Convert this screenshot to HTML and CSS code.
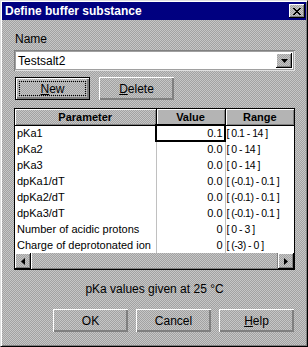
FILE: index.html
```html
<!DOCTYPE html>
<html lang="en">
<head>
  <meta charset="UTF-8">
  <title>Define buffer substance</title>
  <link rel="stylesheet" href="styles.css">
</head>
<body>

  <div class="window dither">
    <!-- Title bar -->
    <div class="titlebar">
      <span class="title">Define buffer substance</span>
      <button class="close dither" title="Close">
        <svg width="8" height="7" viewBox="0 0 8 7"><path d="M0 0h2v1h1v1h2v-1h1v-1h2v1h-1v1h-1v1h-1v1h1v1h1v1h1v1h-2v-1h-1v-1h-2v1h-1v1h-2v-1h1v-1h1v-1h1v-1h-1v-1h-1v-1h-1z" fill="#000"/></svg>
      </button>
    </div>

    <div class="content">
      <div class="label">Name</div>

      <div class="combo">
        <span class="combo-text">Testsalt2</span>
        <span class="combo-btn dither">
          <svg width="7" height="4" viewBox="0 0 7 4"><path d="M0 0h7l-3.5 4z" fill="#000"/></svg>
        </span>
      </div>

      <div class="toolbar">
        <button class="btn btn-default dither"><span class="focus"><u>N</u>ew</span></button>
        <button class="btn dither"><u>D</u>elete</button>
      </div>

      <!-- Parameter grid -->
      <div class="grid">
        <table>
          <colgroup>
            <col class="col-param">
            <col class="col-value">
            <col class="col-range">
          </colgroup>
          <thead>
            <tr>
              <th class="dither">Parameter</th>
              <th class="dither">Value</th>
              <th class="dither">Range</th>
            </tr>
          </thead>
          <tbody>
            <tr><td>pKa1</td><td class="val current">0.1</td><td class="rng">[ 0.1 - 14 ]</td></tr>
            <tr><td>pKa2</td><td class="val">0.0</td><td class="rng">[ 0 - 14 ]</td></tr>
            <tr><td>pKa3</td><td class="val">0.0</td><td class="rng">[ 0 - 14 ]</td></tr>
            <tr><td>dpKa1/dT</td><td class="val">0.0</td><td class="rng">[ (-0.1) - 0.1 ]</td></tr>
            <tr><td>dpKa2/dT</td><td class="val">0.0</td><td class="rng">[ (-0.1) - 0.1 ]</td></tr>
            <tr><td>dpKa3/dT</td><td class="val">0.0</td><td class="rng">[ (-0.1) - 0.1 ]</td></tr>
            <tr><td>Number of acidic protons</td><td class="val">0</td><td class="rng">[ 0 - 3 ]</td></tr>
            <tr><td>Charge of deprotonated ion</td><td class="val">0</td><td class="rng">[ (-3) - 0 ]</td></tr>
          </tbody>
        </table>

        <div class="hscroll dither">
          <span class="arrow dither">
            <svg width="4" height="7" viewBox="0 0 4 7"><path d="M4 0v7l-4-3.5z" fill="#000"/></svg>
          </span>
          <span class="thumb dither"></span>
          <span class="arrow dither">
            <svg width="4" height="7" viewBox="0 0 4 7"><path d="M0 0v7l4-3.5z" fill="#000"/></svg>
          </span>
        </div>
      </div>

      <p class="note">pKa values given at 25 °C</p>

      <div class="actions">
        <button class="btn dither">OK</button>
        <button class="btn dither">Cancel</button>
        <button class="btn dither"><u>H</u>elp</button>
      </div>
    </div>
  </div>

</body>
</html>
```

FILE: styles.css
```css
* {
  box-sizing: border-box;
}

body {
  margin: 0;
  font-family: "Liberation Sans", Arial, sans-serif;
  font-size: 11px;
  color: #000;
  background: #c0c0c0;
}

/* dithered grey of the old 256 colour screen */
.dither {
  background-color: #b8b8b8;
  background-image: conic-gradient(#a2a2a2 0 25%, #c6c6c6 0 50%, #a2a2a2 0 75%, #c6c6c6 0);
  background-size: 2px 2px;
}

.window {
  width: 308px;
  height: 347px;
  border: 1px solid;
  border-color: #dfdfdf #000 #000 #dfdfdf;
  box-shadow: inset 1px 1px #fff, inset -1px -1px #808080;
  padding: 1px;
  display: flex;
  flex-direction: column;
}

.titlebar {
  height: 18px;
  background: #000080;
  display: flex;
  align-items: center;
  justify-content: space-between;
  padding: 0 1px 0 3px;
}

.title {
  color: #fff;
  font-weight: bold;
  font-size: 12px;
}

.close {
  width: 16px;
  height: 14px;
  border: none;
  padding: 0;
  display: flex;
  align-items: center;
  justify-content: center;
  box-shadow: inset -1px -1px #000, inset 1px 1px #fff, inset -2px -2px #808080;
}

.content {
  padding: 13px 11px 0 12px;
  display: flex;
  flex-direction: column;
}

.label {
  line-height: 13px;
  padding-left: 1px;
  font-size: 12px;
}

.combo {
  margin-top: 4px;
  height: 21px;
  background: #fff;
  display: flex;
  align-items: center;
  justify-content: space-between;
  padding: 0 3px 0 4px;
  box-shadow: inset 1px 1px #808080, inset -1px -1px #dfdfdf, inset 2px 2px #a0a0a0, inset -2px -2px #a0a0a0;
}

.combo-text {
  font-size: 12px;
}

.combo-btn {
  width: 16px;
  height: 15px;
  display: flex;
  align-items: center;
  justify-content: center;
  box-shadow: inset -1px -1px #000, inset 1px 1px #fff, inset -2px -2px #808080;
}

.toolbar {
  margin-top: 6px;
  padding-left: 1px;
  display: flex;
  gap: 9px;
}

.btn {
  width: 75px;
  height: 23px;
  border: none;
  padding: 0;
  font-family: inherit;
  font-size: 12px;
  color: #000;
  display: flex;
  align-items: center;
  justify-content: center;
  box-shadow: inset 1px 1px #fff, inset -1px -1px #808080, inset -2px -2px #808080;
}

.btn-default {
  box-shadow: inset 0 0 0 1px #000, inset 2px 2px #fff, inset -2px -2px #808080, inset -3px -3px #808080;
}

.focus {
  width: 67px;
  height: 15px;
  border: 1px dotted #000;
  display: flex;
  align-items: center;
  justify-content: center;
}

.grid {
  margin-top: 8px;
  width: 281px;
  border: 1px solid #000;
  background: #fff;
}

table {
  width: 279px;
  table-layout: fixed;
  border-collapse: collapse;
}

.col-param { width: 141px; }
.col-value { width: 69px; }
.col-range { width: 69px; }

th {
  height: 16px;
  padding: 0;
  font-weight: bold;
  text-align: center;
  border-right: 1px solid #000;
  border-bottom: 1px solid #000;
  box-shadow: inset 1px 1px #fff, inset -1px -1px #808080;
}

th:last-child {
  border-right: none;
}

td {
  height: 16px;
  padding: 0 2px;
  white-space: nowrap;
  overflow: hidden;
  border-right: 1px solid #c0c0c0;
}

td:last-child {
  border-right: none;
}

td.val {
  text-align: right;
}

td.rng {
  padding-left: 1px;
  font-size: 10.5px;
  letter-spacing: -0.5px;
}

td.current {
  outline: 2px solid #000;
  outline-offset: -1px;
}

.hscroll {
  height: 16px;
  display: flex;
}

.arrow {
  width: 16px;
  height: 16px;
  display: flex;
  align-items: center;
  justify-content: center;
  box-shadow: inset -1px -1px #000, inset 1px 1px #fff, inset -2px -2px #808080;
}

.thumb {
  flex: 1;
  box-shadow: inset 1px 0 #fff, inset -1px -1px #808080;
}

.note {
  margin: 13px 0 0;
  line-height: 13px;
  text-align: center;
  font-size: 12px;
}

.actions {
  margin-top: 13px;
  display: flex;
  justify-content: flex-end;
  gap: 8px;
  padding-right: 1px;
}
```
